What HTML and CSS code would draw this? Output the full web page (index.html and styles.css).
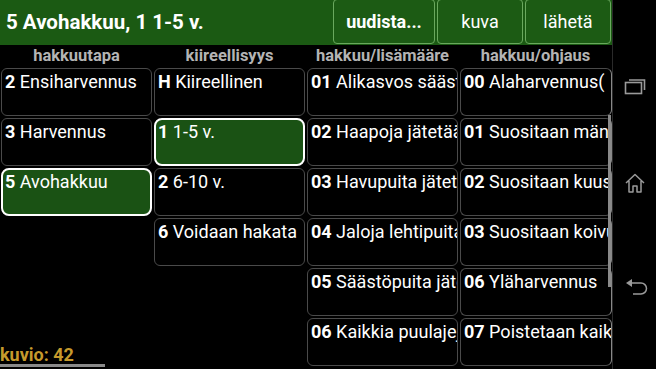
FILE: index.html
```html
<!DOCTYPE html>
<html>
<head>
<meta charset="utf-8">
<link rel="stylesheet" href="styles.css">
</head>
<body>
<div class="app">
  <div class="main">
    <div class="topbar">
      <div class="title">5 Avohakkuu, 1 1-5 v.</div>
      <div class="actions">
        <div class="btn bold">uudista...</div>
        <div class="btn">kuva</div>
        <div class="btn">lähetä</div>
      </div>
    </div>
    <div class="cols">
      <div class="col">
        <div class="colhead">hakkuutapa</div>
        <div class="cell"><b>2</b> Ensiharvennus</div>
        <div class="cell"><b>3</b> Harvennus</div>
        <div class="cell sel"><b>5</b> Avohakkuu</div>
      </div>
      <div class="col">
        <div class="colhead">kiireellisyys</div>
        <div class="cell"><b>H</b> Kiireellinen</div>
        <div class="cell sel"><b>1</b> 1-5 v.</div>
        <div class="cell"><b>2</b> 6-10 v.</div>
        <div class="cell"><b>6</b> Voidaan hakata</div>
      </div>
      <div class="col">
        <div class="colhead">hakkuu/lisämääre</div>
        <div class="cell"><b>01</b> Alikasvos säästetään</div>
        <div class="cell"><b>02</b> Haapoja jätetään</div>
        <div class="cell"><b>03</b> Havupuita jätetään</div>
        <div class="cell"><b>04</b> Jaloja lehtipuita</div>
        <div class="cell"><b>05</b> Säästöpuita jätetään</div>
        <div class="cell"><b>06</b> Kaikkia puulajeja</div>
      </div>
      <div class="col last">
        <div class="colhead">hakkuu/ohjaus</div>
        <div class="cell"><b>00</b> Alaharvennus(</div>
        <div class="cell"><b>01</b> Suositaan mäntyä</div>
        <div class="cell"><b>02</b> Suositaan kuusta</div>
        <div class="cell"><b>03</b> Suositaan koivua</div>
        <div class="cell"><b>06</b> Yläharvennus</div>
        <div class="cell"><b>07</b> Poistetaan kaikki</div>
        <div class="vscroll"></div>
      </div>
    </div>
    <div class="hscroll"></div>
    <div class="kuvio">kuvio: 42</div>
  </div>
  <div class="nav">
    <svg class="navicon" width="22" height="18" viewBox="0 0 22 18">
      <rect x="1.5" y="5.5" width="16" height="11" fill="none" stroke="#9a9a9a" stroke-width="1.6"/>
      <path d="M5 3 H20.5 V13" fill="none" stroke="#9a9a9a" stroke-width="1.6"/>
    </svg>
    <svg class="navicon" width="22" height="22" viewBox="0 0 22 22">
      <path d="M2 11 L11 2.5 L20 11 M5 9 V20 H9 V14 H13 V20 H17 V9" fill="none" stroke="#9a9a9a" stroke-width="1.5" stroke-linejoin="round"/>
    </svg>
    <svg class="navicon" width="24" height="18" viewBox="0 0 24 18">
      <path d="M2 5 L8 1 V9 Z" fill="#9a9a9a"/>
      <path d="M6 5 H17 A5.5 5.5 0 0 1 17 16 H9" fill="none" stroke="#9a9a9a" stroke-width="1.5"/>
    </svg>
  </div>
</div>
</body>
</html>
```

FILE: styles.css
```css
html, body {
  margin: 0;
  padding: 0;
  background: #000;
}
body {
  width: 656px;
  height: 369px;
  overflow: hidden;
  font-family: Roboto, "Liberation Sans", sans-serif;
  color: #fff;
}
.app {
  display: flex;
  width: 656px;
  height: 369px;
}
.main {
  position: relative;
  width: 612px;
  height: 369px;
  overflow: hidden;
}
.topbar {
  height: 45px;
  background: #1b5a13;
  display: flex;
  align-items: center;
  justify-content: space-between;
}
.title {
  font-size: 20.5px;
  font-weight: bold;
  padding-left: 6px;
  padding-bottom: 2px;
  white-space: nowrap;
}
.actions {
  display: flex;
  gap: 2px;
  height: 45px;
  align-items: flex-start;
  padding-right: 1px;
}
.btn {
  margin-top: -1px;
  border: 1.5px solid #6aa85e;
  border-radius: 4px;
  background: #1c5b14;
  display: flex;
  align-items: center;
  justify-content: center;
  font-size: 18px;
  color: #fff;
  width: 86px;
  box-sizing: border-box;
  height: 45px;
}
.btn.bold {
  font-weight: bold;
  width: 102px;
}
.cols {
  display: flex;
}
.col {
  position: relative;
  width: 153px;
  display: flex;
  flex-direction: column;
}
.colhead {
  height: 22px;
  line-height: 22px;
  text-align: center;
  font-size: 16.5px;
  font-weight: bold;
  color: #b4b4b4;
  white-space: nowrap;
}
.cell {
  height: 48px;
  margin: 1px;
  border: 1.5px solid #4a4a4a;
  border-radius: 6px;
  box-sizing: border-box;
  padding: 2px 0 0 3px;
  font-size: 18px;
  line-height: 21px;
  white-space: nowrap;
  overflow: hidden;
  color: #fff;
}
.cell b {
  font-weight: bold;
}
.cell.sel {
  background: #1a5214;
  border: 2.5px solid #fff;
  border-radius: 8px;
  padding: 1px 0 0 2px;
}
.col.last .cell {
  margin-right: 0;
  border-right-color: #888;
}
.vscroll {
  position: absolute;
  right: 1px;
  top: 70px;
  width: 3px;
  height: 172px;
  background: #8a8a8a;
}
.hscroll {
  position: absolute;
  left: 0;
  top: 364px;
  width: 105px;
  height: 3px;
  background: #8a8a8a;
}
.kuvio {
  position: absolute;
  left: 0;
  top: 344px;
  font-size: 18px;
  font-weight: bold;
  color: #c69a2c;
}
.nav {
  width: 44px;
  height: 369px;
  position: relative;
  border-left: 1px solid #2a2a2a;
  box-sizing: border-box;
}
.navicon {
  position: absolute;
  left: 11px;
}
.navicon:nth-child(1) { top: 77px; }
.navicon:nth-child(2) { top: 172px; }
.navicon:nth-child(3) { top: 278px; }
```
